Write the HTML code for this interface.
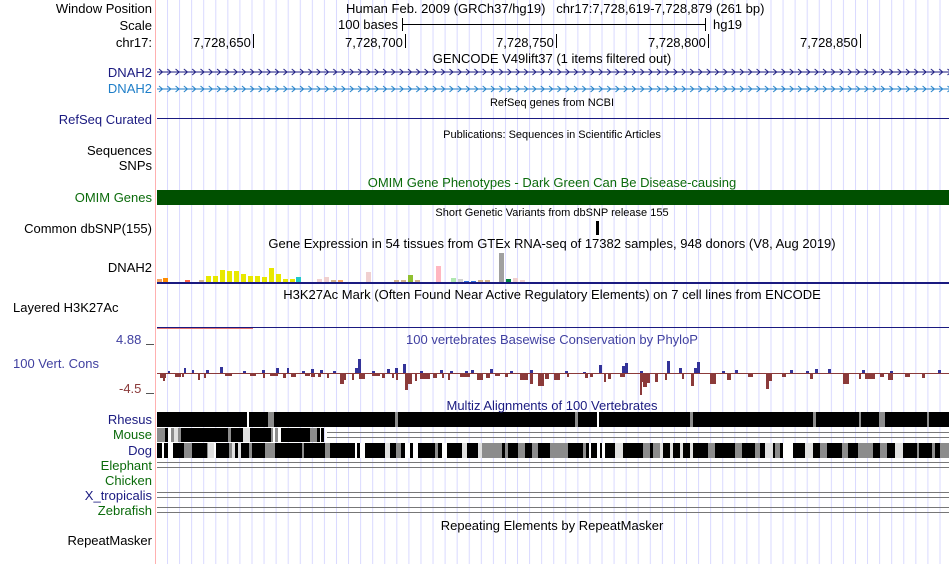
<!DOCTYPE html>
<html><head><meta charset="utf-8"><style>
html,body{margin:0;padding:0;background:#fff;}
body{width:950px;height:564px;position:relative;overflow:hidden;font-family:"Liberation Sans",sans-serif;font-size:13px;}
.t{position:absolute;white-space:nowrap;line-height:15px;}
.r{text-align:right;right:798px;}
.s{font-size:11px;}
.c{transform:translateX(-50%);}
.nv{color:#1a1a80}
.gr{color:#0b6b0b}
</style></head><body>
<svg width="950" height="564" style="position:absolute;left:0;top:0">
<defs>
<pattern id="grid" x="167" y="0" width="12.07" height="564" patternUnits="userSpaceOnUse">
<rect x="0" y="0" width="1" height="564" fill="#d9d9ff"/>
</pattern>
<pattern id="arr1" x="157" y="0" width="8.3" height="10" patternUnits="userSpaceOnUse">
<path d="M2 1 L5.5 4 L2 7" stroke="#1a1a80" fill="none" stroke-width="1"/>
</pattern>
<pattern id="arr2" x="157" y="0" width="8.3" height="10" patternUnits="userSpaceOnUse">
<path d="M2 1 L5.5 4 L2 7" stroke="#1e7ec8" fill="none" stroke-width="1"/>
</pattern>
</defs>
<rect x="160" y="0" width="790" height="564" fill="url(#grid)"/>
<rect x="155" y="0" width="1" height="564" fill="#ffb0b0"/>
<!-- scale -->
<rect x="402" y="24" width="303" height="1" fill="#000"/>
<rect x="402" y="18" width="1" height="13" fill="#000"/>
<rect x="705" y="18" width="1" height="13" fill="#000"/>
<g fill="#000">
<rect x="253" y="34" width="1" height="14"/><rect x="405" y="34" width="1" height="14"/>
<rect x="556" y="34" width="1" height="14"/><rect x="708" y="34" width="1" height="14"/><rect x="860" y="34" width="1" height="14"/>
</g>
<!-- DNAH2 -->
<rect x="157" y="71.5" width="792" height="1" fill="#1a1a80"/>
<g transform="translate(0,68)"><rect x="157" y="0" width="792" height="8" fill="url(#arr1)"/></g>
<rect x="157" y="88.5" width="792" height="1" fill="#1e7ec8"/>
<g transform="translate(0,85)"><rect x="157" y="0" width="792" height="8" fill="url(#arr2)"/></g>
<rect x="157" y="118" width="792" height="1" fill="#1a1a80"/>
<!-- OMIM -->
<rect x="157" y="190" width="792" height="15" fill="#005000"/>
<rect x="596" y="221" width="3" height="14" fill="#000"/>
<!-- GTEx -->
<g>
<rect x="157" y="279" width="5" height="3" fill="#f4a460"/>
<rect x="163" y="278" width="5" height="4" fill="#ff8c00"/>
<rect x="185" y="280" width="5" height="2" fill="#ff6347"/>
<rect x="199" y="280" width="5" height="2" fill="#d2b48c"/>
<rect x="206" y="276" width="5" height="6" fill="#e8e800"/>
<rect x="213" y="276" width="5" height="6" fill="#e8e800"/>
<rect x="220" y="270" width="5" height="12" fill="#e8e800"/>
<rect x="227" y="271" width="5" height="11" fill="#e8e800"/>
<rect x="234" y="271" width="5" height="11" fill="#e8e800"/>
<rect x="241" y="274" width="5" height="8" fill="#e8e800"/>
<rect x="248" y="276" width="5" height="6" fill="#e8e800"/>
<rect x="255" y="276" width="5" height="6" fill="#e8e800"/>
<rect x="262" y="277" width="5" height="5" fill="#e8e800"/>
<rect x="269" y="268" width="5" height="14" fill="#e8e800"/>
<rect x="276" y="274" width="5" height="8" fill="#e8e800"/>
<rect x="283" y="279" width="5" height="3" fill="#e8e800"/>
<rect x="290" y="279" width="5" height="3" fill="#e8e800"/>
<rect x="296" y="277" width="5" height="5" fill="#20c8c8"/>
<rect x="317" y="279" width="5" height="3" fill="#f0d0d0"/>
<rect x="324" y="277" width="5" height="5" fill="#f0d0d0"/>
<rect x="331" y="280" width="5" height="2" fill="#d2b48c"/>
<rect x="338" y="280" width="5" height="2" fill="#f4a460"/>
<rect x="366" y="272" width="5" height="10" fill="#f0d0d0"/>
<rect x="394" y="280" width="5" height="2" fill="#d2b48c"/>
<rect x="401" y="280" width="5" height="2" fill="#d2b48c"/>
<rect x="408" y="275" width="5" height="7" fill="#90c030"/>
<rect x="415" y="280" width="5" height="2" fill="#d2b48c"/>
<rect x="436" y="266" width="5" height="16" fill="#ffb6c1"/>
<rect x="451" y="278" width="5" height="4" fill="#b0e8b0"/>
<rect x="458" y="279" width="5" height="3" fill="#d0d0d0"/>
<rect x="464" y="281" width="5" height="1" fill="#3070e0"/>
<rect x="471" y="281" width="5" height="1" fill="#3070e0"/>
<rect x="478" y="280" width="5" height="2" fill="#d2b48c"/>
<rect x="485" y="280" width="5" height="2" fill="#d2b48c"/>
<rect x="499" y="253" width="5" height="29" fill="#a0a0a0"/>
<rect x="506" y="279" width="5" height="3" fill="#008040"/>
<rect x="513" y="278" width="5" height="4" fill="#f0d0d0"/>
<rect x="520" y="280" width="5" height="2" fill="#f0d0d0"/>
</g>
<rect x="157" y="282" width="792" height="2" fill="#1a1a80"/>
<rect x="157" y="327" width="792" height="1" fill="#1a1a80"/>
<rect x="157" y="328" width="96" height="1" fill="#e07070"/>
<!-- ticks on left -->
<rect x="146" y="344" width="8" height="1" fill="#555"/>
<rect x="146" y="393" width="8" height="1" fill="#555"/>
<!-- conservation -->
<rect x="157" y="373" width="792" height="1" fill="#8b3a3a"/>
<g fill="#333399">
<rect x="168" y="371" width="2" height="2"/><rect x="184" y="368" width="2" height="5"/><rect x="192" y="370" width="2" height="3"/>
<rect x="206" y="370" width="3" height="3"/><rect x="220" y="367" width="3" height="6"/><rect x="243" y="371" width="3" height="2"/>
<rect x="262" y="370" width="3" height="3"/><rect x="276" y="368" width="3" height="5"/><rect x="287" y="368" width="2" height="5"/>
<rect x="302" y="371" width="3" height="2"/><rect x="311" y="369" width="3" height="4"/><rect x="320" y="370" width="3" height="3"/>
<rect x="333" y="371" width="3" height="2"/><rect x="355" y="368" width="3" height="5"/><rect x="358" y="359" width="3" height="14"/>
<rect x="372" y="371" width="3" height="2"/><rect x="387" y="369" width="3" height="4"/><rect x="395" y="368" width="3" height="5"/><rect x="403" y="364" width="3" height="9"/>
<rect x="420" y="371" width="3" height="2"/><rect x="440" y="370" width="3" height="3"/><rect x="450" y="371" width="3" height="2"/><rect x="465" y="371" width="3" height="2"/><rect x="471" y="370" width="3" height="3"/>
<rect x="490" y="369" width="3" height="4"/><rect x="510" y="371" width="3" height="2"/><rect x="530" y="370" width="3" height="3"/>
<rect x="565" y="371" width="3" height="2"/><rect x="583" y="372" width="3" height="1"/><rect x="599" y="365" width="3" height="8"/>
<rect x="622" y="366" width="3" height="7"/><rect x="625" y="363" width="3" height="10"/><rect x="640" y="371" width="3" height="2"/>
<rect x="667" y="361" width="3" height="12"/><rect x="679" y="368" width="3" height="5"/><rect x="694" y="368" width="3" height="5"/><rect x="697" y="362" width="3" height="11"/>
<rect x="722" y="371" width="3" height="2"/><rect x="735" y="370" width="3" height="3"/><rect x="790" y="370" width="3" height="3"/><rect x="806" y="371" width="3" height="2"/>
<rect x="815" y="369" width="3" height="4"/><rect x="828" y="369" width="3" height="4"/><rect x="862" y="370" width="3" height="3"/><rect x="890" y="371" width="3" height="2"/><rect x="938" y="370" width="3" height="3"/>
</g>
<g fill="#8b3a3a">
<rect x="160" y="374" width="6" height="4"/><rect x="163" y="374" width="2" height="7"/><rect x="175" y="374" width="6" height="3"/><rect x="182" y="374" width="2" height="3"/>
<rect x="198" y="374" width="2" height="6"/><rect x="204" y="374" width="2" height="4"/><rect x="225" y="374" width="7" height="2"/><rect x="250" y="374" width="6" height="2"/>
<rect x="263" y="374" width="2" height="4"/><rect x="270" y="374" width="8" height="2"/><rect x="283" y="374" width="3" height="4"/><rect x="291" y="374" width="5" height="3"/>
<rect x="305" y="374" width="5" height="2"/><rect x="311" y="374" width="4" height="3"/><rect x="318" y="374" width="3" height="3"/><rect x="327" y="374" width="2" height="4"/>
<rect x="340" y="374" width="4" height="10"/><rect x="344" y="374" width="2" height="6"/><rect x="352" y="374" width="2" height="6"/><rect x="359" y="374" width="6" height="5"/>
<rect x="372" y="374" width="8" height="2"/><rect x="382" y="374" width="3" height="4"/><rect x="392" y="374" width="2" height="4"/><rect x="396" y="374" width="2" height="6"/>
<rect x="405" y="374" width="3" height="16"/><rect x="408" y="374" width="4" height="10"/><rect x="415" y="374" width="2" height="7"/><rect x="420" y="374" width="10" height="5"/>
<rect x="433" y="374" width="4" height="4"/><rect x="442" y="374" width="2" height="4"/><rect x="448" y="374" width="2" height="6"/><rect x="460" y="374" width="10" height="3"/>
<rect x="477" y="374" width="6" height="6"/><rect x="486" y="374" width="4" height="4"/><rect x="495" y="374" width="5" height="2"/><rect x="505" y="374" width="3" height="3"/>
<rect x="520" y="374" width="8" height="6"/><rect x="530" y="374" width="3" height="10"/><rect x="538" y="374" width="6" height="12"/><rect x="545" y="374" width="4" height="5"/>
<rect x="554" y="374" width="6" height="6"/><rect x="567" y="374" width="2" height="3"/><rect x="585" y="374" width="3" height="4"/><rect x="590" y="374" width="3" height="3"/>
<rect x="604" y="374" width="2" height="8"/><rect x="608" y="374" width="3" height="5"/><rect x="620" y="374" width="5" height="3"/><rect x="640" y="374" width="3" height="8"/>
<rect x="640" y="374" width="2" height="21"/><rect x="643" y="374" width="4" height="13"/><rect x="647" y="374" width="3" height="9"/><rect x="655" y="374" width="3" height="8"/>
<rect x="665" y="374" width="2" height="6"/><rect x="682" y="374" width="2" height="5"/><rect x="691" y="374" width="3" height="12"/><rect x="710" y="374" width="6" height="10"/>
<rect x="727" y="374" width="4" height="6"/><rect x="748" y="374" width="5" height="3"/><rect x="766" y="374" width="3" height="15"/><rect x="769" y="374" width="3" height="7"/>
<rect x="782" y="374" width="4" height="3"/><rect x="810" y="374" width="3" height="5"/><rect x="843" y="374" width="6" height="10"/><rect x="859" y="374" width="2" height="5"/>
<rect x="865" y="374" width="10" height="5"/><rect x="880" y="374" width="4" height="3"/><rect x="888" y="374" width="5" height="6"/><rect x="905" y="374" width="5" height="3"/><rect x="922" y="374" width="3" height="4"/>
</g>
<!-- Rhesus -->
<rect x="157" y="412" width="792" height="15" fill="#000"/>
<g fill="#fff"><rect x="247" y="412" width="2" height="15"/><rect x="597" y="412" width="2" height="15"/></g>
<g fill="#8c8c8c"><rect x="268" y="412" width="6" height="15"/><rect x="395" y="412" width="3" height="15"/><rect x="575" y="412" width="3" height="15"/>
<rect x="690" y="412" width="3" height="15"/><rect x="813" y="412" width="3" height="15"/><rect x="859" y="412" width="2" height="15"/><rect x="879" y="412" width="6" height="15"/><rect x="927" y="412" width="2" height="15"/></g>
<!-- Mouse -->
<g>
<rect x="157" y="428" width="8" height="14" fill="#8c8c8c"/><rect x="165" y="428" width="3" height="14" fill="#000"/>
<rect x="171" y="428" width="3" height="14" fill="#8c8c8c"/><rect x="174" y="428" width="4" height="14" fill="#e0e0e0"/><rect x="178" y="428" width="3" height="14" fill="#8c8c8c"/>
<rect x="181" y="428" width="47" height="14" fill="#000"/><rect x="228" y="428" width="3" height="14" fill="#8c8c8c"/><rect x="231" y="428" width="12" height="14" fill="#000"/>
<rect x="243" y="428" width="7" height="14" fill="#e0e0e0"/><rect x="250" y="428" width="21" height="14" fill="#000"/><rect x="271" y="428" width="2" height="14" fill="#8c8c8c"/>
<rect x="275" y="428" width="3" height="14" fill="#8c8c8c"/><rect x="281" y="428" width="29" height="14" fill="#000"/><rect x="310" y="428" width="7" height="14" fill="#8c8c8c"/>
<rect x="317" y="428" width="3" height="14" fill="#000"/><rect x="321" y="428" width="3" height="14" fill="#000"/>
<rect x="327" y="432" width="622" height="1" fill="#777"/><rect x="327" y="437" width="622" height="1" fill="#777"/>
</g>
<!-- Dog -->
<g>
<rect x="157" y="443" width="792" height="15" fill="#000"/>
<g fill="#fff"><rect x="162" y="443" width="2" height="15"/><rect x="168" y="443" width="5" height="15"/><rect x="214" y="443" width="2" height="15"/><rect x="355" y="443" width="2" height="15"/><rect x="360" y="443" width="5" height="15"/><rect x="405" y="443" width="5" height="15"/><rect x="413" y="443" width="5" height="15"/><rect x="442" y="443" width="5" height="15"/>
<rect x="589" y="443" width="2" height="15"/><rect x="597" y="443" width="3" height="15"/><rect x="602" y="443" width="3" height="15"/><rect x="783" y="443" width="10" height="15"/></g>
<g fill="#8c8c8c"><rect x="184" y="443" width="8" height="15"/><rect x="207" y="443" width="2" height="15"/><rect x="229" y="443" width="3" height="15"/><rect x="249" y="443" width="3" height="15"/><rect x="265" y="443" width="10" height="15"/>
<rect x="302" y="443" width="2" height="15"/><rect x="325" y="443" width="5" height="15"/><rect x="396" y="443" width="5" height="15"/><rect x="435" y="443" width="3" height="15"/><rect x="482" y="443" width="20" height="15"/>
<rect x="505" y="443" width="3" height="15"/><rect x="518" y="443" width="7" height="15"/><rect x="532" y="443" width="6" height="15"/><rect x="550" y="443" width="18" height="15"/><rect x="583" y="443" width="3" height="15"/>
<rect x="643" y="443" width="7" height="15"/><rect x="653" y="443" width="7" height="15"/><rect x="708" y="443" width="7" height="15"/><rect x="735" y="443" width="7" height="15"/><rect x="755" y="443" width="5" height="15"/>
<rect x="775" y="443" width="5" height="15"/><rect x="820" y="443" width="7" height="15"/><rect x="842" y="443" width="6" height="15"/><rect x="858" y="443" width="15" height="15"/><rect x="880" y="443" width="7" height="15"/><rect x="917" y="443" width="2" height="15"/><rect x="932" y="443" width="3" height="15"/><rect x="940" y="443" width="9" height="15"/></g>
<g fill="#e0e0e0"><rect x="208" y="443" width="6" height="15"/><rect x="232" y="443" width="3" height="15"/><rect x="238" y="443" width="3" height="15"/><rect x="385" y="443" width="5" height="15"/><rect x="462" y="443" width="5" height="15"/><rect x="478" y="443" width="4" height="15"/>
<rect x="615" y="443" width="8" height="15"/><rect x="660" y="443" width="3" height="15"/><rect x="670" y="443" width="3" height="15"/><rect x="680" y="443" width="3" height="15"/><rect x="690" y="443" width="3" height="15"/><rect x="765" y="443" width="8" height="15"/><rect x="805" y="443" width="8" height="15"/><rect x="895" y="443" width="8" height="15"/></g>
</g>
<!-- double lines -->
<g fill="#777">
<rect x="157" y="462" width="792" height="1"/><rect x="157" y="467" width="792" height="1"/>
<rect x="157" y="492" width="792" height="1"/><rect x="157" y="497" width="792" height="1"/>
<rect x="157" y="507" width="792" height="1"/><rect x="157" y="512" width="792" height="1"/>
</g>
</svg>

<div class="t r" style="top:1px">Window Position</div>
<div class="t r" style="top:18px">Scale</div>
<div class="t r" style="top:35px">chr17:</div>
<div class="t" style="left:346px;top:1px">Human Feb. 2009 (GRCh37/hg19)&nbsp;&nbsp; chr17:7,728,619-7,728,879 (261 bp)</div>
<div class="t" style="left:338px;top:17px">100 bases</div>
<div class="t" style="left:713px;top:17px">hg19</div>
<div class="t" style="left:193px;top:35px">7,728,650</div>
<div class="t" style="left:345px;top:35px">7,728,700</div>
<div class="t" style="left:496px;top:35px">7,728,750</div>
<div class="t" style="left:648px;top:35px">7,728,800</div>
<div class="t" style="left:800px;top:35px">7,728,850</div>
<div class="t c" style="left:552px;top:51px">GENCODE V49lift37 (1 items filtered out)</div>
<div class="t r nv" style="top:65px">DNAH2</div>
<div class="t r" style="top:81px;color:#1e7ec8">DNAH2</div>
<div class="t c s" style="left:552px;top:96px">RefSeq genes from NCBI</div>
<div class="t r nv" style="top:112px">RefSeq Curated</div>
<div class="t c s" style="left:552px;top:128px">Publications: Sequences in Scientific Articles</div>
<div class="t r" style="top:143px">Sequences</div>
<div class="t r" style="top:158px">SNPs</div>
<div class="t c gr" style="left:552px;top:175px">OMIM Gene Phenotypes - Dark Green Can Be Disease-causing</div>
<div class="t r gr" style="top:190px">OMIM Genes</div>
<div class="t c s" style="left:552px;top:206px">Short Genetic Variants from dbSNP release 155</div>
<div class="t r" style="top:221px">Common dbSNP(155)</div>
<div class="t c" style="left:552px;top:236px">Gene Expression in 54 tissues from GTEx RNA-seq of 17382 samples, 948 donors (V8, Aug 2019)</div>
<div class="t r" style="top:260px">DNAH2</div>
<div class="t c" style="left:552px;top:287px">H3K27Ac Mark (Often Found Near Active Regulatory Elements) on 7 cell lines from ENCODE</div>
<div class="t" style="left:13px;top:300px">Layered H3K27Ac</div>
<div class="t" style="left:116px;top:332px;color:#4040a0">4.88</div>
<div class="t c" style="left:552px;top:332px;color:#4040a0">100 vertebrates Basewise Conservation by PhyloP</div>
<div class="t" style="left:13px;top:356px;color:#4040a0">100 Vert. Cons</div>
<div class="t" style="left:119px;top:381px;color:#8b3a3a">-4.5</div>
<div class="t c nv" style="left:552px;top:398px">Multiz Alignments of 100 Vertebrates</div>
<div class="t r nv" style="top:412px">Rhesus</div>
<div class="t r gr" style="top:427px">Mouse</div>
<div class="t r nv" style="top:443px">Dog</div>
<div class="t r gr" style="top:458px">Elephant</div>
<div class="t r gr" style="top:473px">Chicken</div>
<div class="t r nv" style="top:488px">X_tropicalis</div>
<div class="t r gr" style="top:503px">Zebrafish</div>
<div class="t c" style="left:552px;top:518px">Repeating Elements by RepeatMasker</div>
<div class="t r" style="top:533px">RepeatMasker</div>
</body></html>
